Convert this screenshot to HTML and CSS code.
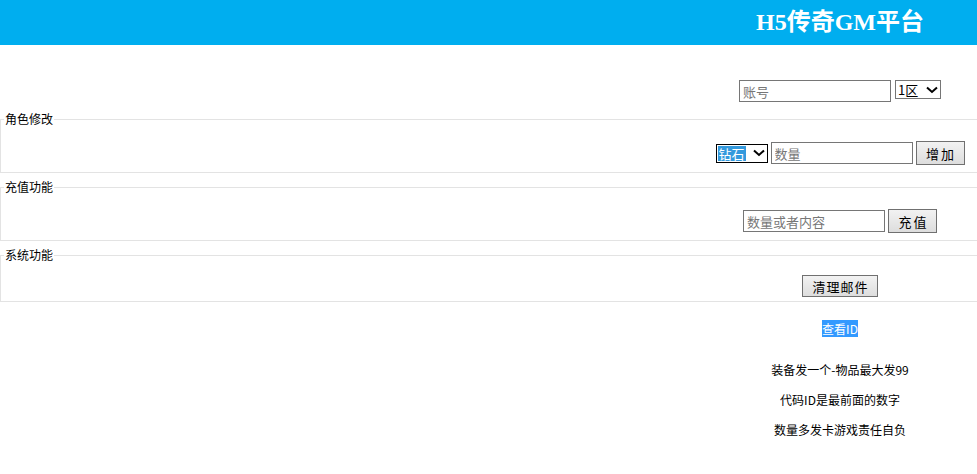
FILE: index.html
```html
<!DOCTYPE html>
<html lang="zh-CN">
<head>
    <meta charset="UTF-8">
    <meta name="viewport" content="width=device-width, initial-scale=1.0">
    <title>H5传奇GM平台</title>
    <link rel="stylesheet" href="styles.css">
</head>
<body>
    <div class="header">
        <h1>H5传奇GM平台</h1>
    </div>

    <div class="row account">
        <input type="text" class="input input-account" placeholder="账号">
        <div class="select select-zone">
            <span class="select-text">1区</span>
            <svg class="chevron" width="12" height="8" viewBox="0 0 12 8"><path d="M1 1.5 L6 6 L11 1.5" fill="none" stroke="#000" stroke-width="2"/></svg>
        </div>
    </div>

    <fieldset class="box">
        <legend>角色修改</legend>
        <div class="row">
            <div class="select select-item">
                <span class="select-text selected">钻石</span>
                <svg class="chevron" width="12" height="8" viewBox="0 0 12 8"><path d="M1 1.5 L6 6 L11 1.5" fill="none" stroke="#000" stroke-width="2"/></svg>
            </div>
            <input type="text" class="input input-num" placeholder="数量">
            <button class="btn">增加</button>
        </div>
    </fieldset>

    <fieldset class="box">
        <legend>充值功能</legend>
        <div class="row">
            <input type="text" class="input input-num" placeholder="数量或者内容">
            <button class="btn">充值</button>
        </div>
    </fieldset>

    <fieldset class="box box-system">
        <legend>系统功能</legend>
        <div class="row">
            <button class="btn btn-small">清理邮件</button>
        </div>
    </fieldset>

    <div class="view">
        <span class="highlight">查看ID</span>
    </div>

    <div class="notes">
        <p>装备发一个-物品最大发99</p>
        <p>代码ID是最前面的数字</p>
        <p>数量多发卡游戏责任自负</p>
    </div>
</body>
</html>
```

FILE: styles.css
```css
body {
    margin: 0;
    font-family: "Noto Sans CJK SC", "DejaVu Sans", sans-serif;
    font-size: 12px;
    color: #000;
    background: #fff;
}
/* the page content is centred in the right part of the window */
.header,
.row,
.view,
.notes {
    box-sizing: border-box;
    padding-left: 703px;
}
.header {
    background-color: #00aeef;
    height: 45px;
    text-align: center;
}
.header h1 {
    margin: 0;
    line-height: 45px;
    font-size: 24px;
    font-family: "Liberation Serif", "Noto Sans CJK SC", serif;
    font-weight: bold;
    color: #fff;
}
.row {
    display: flex;
    justify-content: center;
    align-items: center;
    gap: 3px;
}
.account {
    padding-top: 35px;
    gap: 4px;
    height: 57px;
}
.input {
    box-sizing: border-box;
    height: 22px;
    margin: 0;
    padding: 0 3px;
    border: 1px solid #767676;
    font-family: "Noto Sans CJK SC", sans-serif;
    font-size: 13px;
    color: #333;
    outline: none;
}
.input::placeholder {
    color: #777;
}
.input-account {
    width: 152px;
}
.input-num {
    width: 142px;
}
.select {
    box-sizing: border-box;
    display: flex;
    align-items: center;
    justify-content: space-between;
    border: 1px solid #767676;
    height: 19px;
    padding: 0 2px 0 1px;
    font-size: 13px;
    background: #fff;
}
.select-zone {
    width: 46px;
    align-self: flex-start;
}
.select-item {
    width: 52px;
    border-color: #000;
}
.select-text {
    line-height: 15px;
    padding: 0 1px;
}
.selected {
    background-color: #3399dd;
    color: #fff;
}
.chevron {
    display: block;
}
.box {
    margin: 7px 0 0;
    padding: 0 0 0 3px;
    border: 1px solid #e3e3e3;
    border-right: none;
}
.account + .box {
    margin-top: 10px;
}
.box legend {
    padding: 0 1px;
    line-height: 14px;
    font-size: 12px;
}
.box .row {
    padding-left: 699px;
    padding-top: 15px;
    padding-bottom: 7px;
    height: 46px;
}
.box-system .row {
    padding-top: 13px;
    padding-bottom: 4px;
    height: 39px;
}
.btn {
    box-sizing: border-box;
    height: 24px;
    width: 49px;
    margin: 0;
    padding: 0;
    border: 1px solid #707070;
    background: linear-gradient(#f2f2f2, #dddddd);
    font-family: "Noto Sans CJK SC", sans-serif;
    font-size: 13px;
    letter-spacing: 2px;
    text-indent: 2px;
    color: #000;
}
.btn-small {
    width: 76px;
    height: 22px;
    letter-spacing: 1px;
    text-indent: 1px;
}
.view {
    margin-top: 19px;
    text-align: center;
    line-height: 16px;
}
.highlight {
    background-color: #3399ff;
    color: #fff;
}
.notes {
    margin-top: 25px;
    text-align: center;
}
.notes p {
    margin: 0 0 14px;
    line-height: 16px;
}
```
